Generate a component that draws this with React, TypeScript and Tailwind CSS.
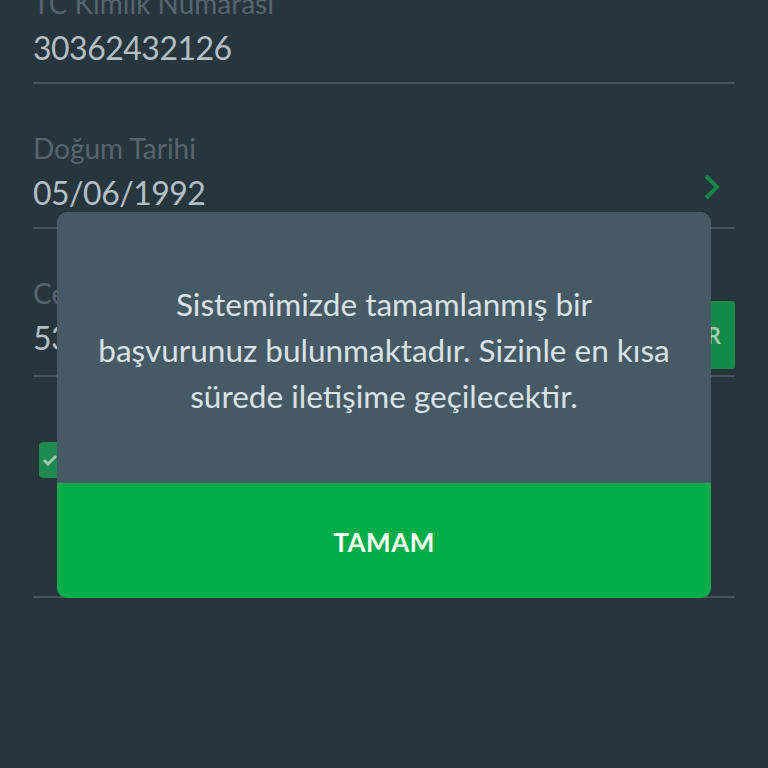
import React from "react";

export default function App() {
  return (
    <div
      className="relative h-[768px] w-[768px] overflow-hidden bg-[#27353d]"
      style={{ fontFamily: "Lato, 'Noto Sans', sans-serif" }}
    >
      {/* background form */}
      <div className="flex flex-col px-[33px] -mt-[13px]">
        {/* field 1 */}
        <div className="flex flex-col border-b-2 border-[#45545c] pb-[14px]">
          <div className="text-[28px] leading-[32px] text-[#56656d]">TC Kimlik Numarası</div>
          <div className="mt-[9px] text-[32px] leading-[40px] tracking-[-0.5px] text-[#b3bec3]">30362432126</div>
        </div>
        {/* field 2 */}
        <div className="mt-[48px] flex flex-col border-b-2 border-[#45545c] pb-[14px]">
          <div className="text-[28px] leading-[32px] text-[#56656d]">Doğum Tarihi</div>
          <div className="mt-[9px] flex items-center justify-between">
            <span className="text-[32px] leading-[40px] tracking-[-0.5px] text-[#b3bec3]">05/06/1992</span>
            <svg width="18" height="28" viewBox="0 0 18 28" className="mr-[14px] -mt-[12px]">
              <path d="M3 3 L14 14 L3 25" fill="none" stroke="#14864a" strokeWidth="4" />
            </svg>
          </div>
        </div>
        {/* field 3 */}
        <div className="mt-[48px] flex items-end justify-between border-b-2 border-[#45545c] pb-[6px]">
          <div className="flex flex-col pb-[11px]">
            <div className="text-[28px] leading-[32px] text-[#56656d]">Cep Telefonu</div>
            <div className="mt-[9px] text-[32px] leading-[40px] tracking-[-0.5px] text-[#b3bec3]">5312345678</div>
          </div>
          <div className="flex h-[68px] items-center rounded-[3px] bg-[#128a48] pl-[10px] pr-[14px] text-[22px] font-bold text-[#a6c9b4]">
            GÖNDER
          </div>
        </div>
        {/* checkbox row */}
        <div className="mt-[65px] flex items-start gap-[16px] border-b-2 border-[#45545c] pb-[118px] pl-[6px]">
          <div className="flex h-[36px] w-[22px] items-center justify-center rounded-[4px] bg-[#1f8a50]">
            <svg width="16" height="12" viewBox="0 0 16 12">
              <path d="M2 6 L6 10 L14 2" fill="none" stroke="#9fc7ad" strokeWidth="3" />
            </svg>
          </div>
          <div className="text-[22px] text-[#56656d]">Kişisel verilerimin işlenmesini onaylıyorum</div>
        </div>
      </div>

      {/* modal */}
      <div className="absolute left-[57px] top-[212px] flex w-[654px] flex-col overflow-hidden rounded-[10px]">
        <div className="flex h-[271px] items-start justify-center bg-[#465a65] px-[20px] pt-[69px]">
          <p className="text-center text-[31.5px] leading-[46px] text-[#dae2e6]">
            Sistemimizde tamamlanmış bir
            <br />
            başvurunuz bulunmaktadır. Sizinle en kısa
            <br />
            sürede iletişime geçilecektir.
          </p>
        </div>
        <div className="flex h-[115px] items-center justify-center bg-[#00ad48] pt-[3px]">
          <span className="text-[26px] font-bold tracking-[0.5px] text-white">TAMAM</span>
        </div>
      </div>
    </div>
  );
}
